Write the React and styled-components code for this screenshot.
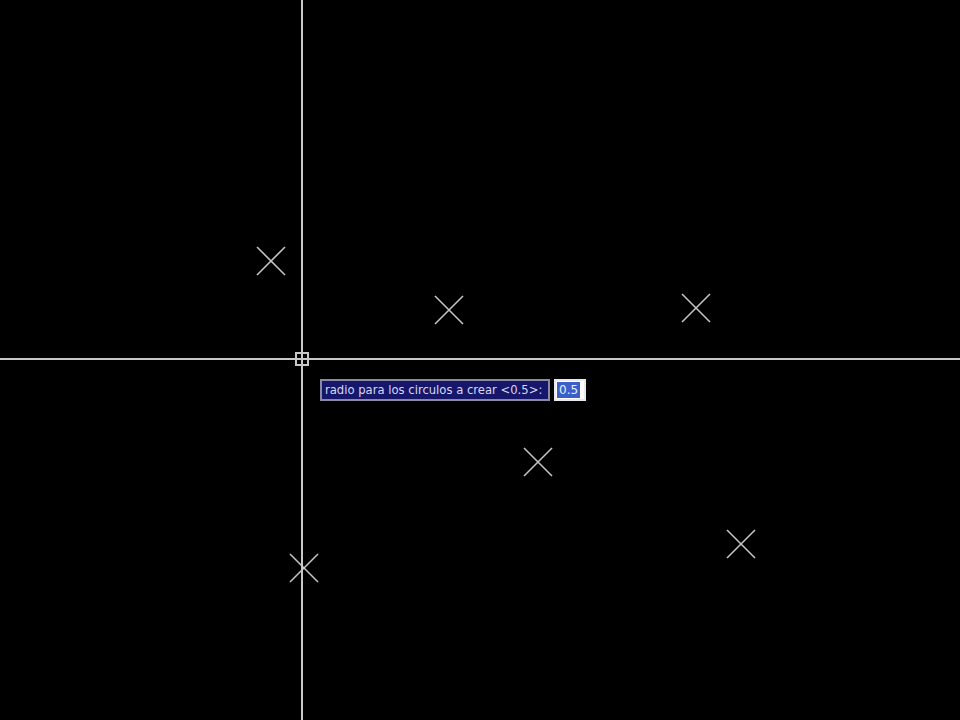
import styled, { createGlobalStyle } from 'styled-components';

const GlobalStyle = createGlobalStyle`
    html, body {
        margin: 0;
        padding: 0;
        background: #000;
    }
`;

// point markers placed in drawing coordinates
const points = [
    { x: 271, y: 261 },
    { x: 449, y: 310 },
    { x: 696, y: 308 },
    { x: 538, y: 462 },
    { x: 741, y: 544 },
    { x: 304, y: 568 },
];

const cursor = { x: 302, y: 359 };

const Viewport = styled.div`
    position: relative;
    width: 960px;
    height: 720px;
    background: #000;
    overflow: hidden;
`;

const Drawing = styled.svg`
    display: block;
`;

const Prompt = styled.div`
    position: absolute;
    left: 320px;
    top: 379px;
    display: flex;
    align-items: center;
    gap: 4px;
`;

const PromptLabel = styled.div`
    height: 18px;
    width: 220px;
    padding: 0 3px;
    display: flex;
    align-items: center;
    background: #16166a;
    border: 2px solid #8a8aa6;
    color: #d8d8f4;
    font-family: 'DejaVu Sans', Verdana, sans-serif;
    font-size: 11.6px;
    white-space: nowrap;
`;

const PromptInput = styled.div`
    height: 18px;
    width: 26px;
    padding: 0 1px;
    display: flex;
    align-items: center;
    background: #fff;
    border: 2px solid #e8e8f0;
    font-family: 'DejaVu Sans', Verdana, sans-serif;
    font-size: 12px;
`;

const Selected = styled.span`
    background: #3b5ec8;
    color: #e8eeff;
    padding: 1px 2px;
`;

const Marker = ({ x, y }) => (
    <g stroke="#c4c4c4" strokeWidth="1.6">
        <line x1={x - 14} y1={y - 14} x2={x + 14} y2={y + 14} />
        <line x1={x + 14} y1={y - 14} x2={x - 14} y2={y + 14} />
    </g>
);

export default function App() {
    return (
        <Viewport>
            <GlobalStyle />
            <Drawing width="960" height="720" viewBox="0 0 960 720">
                {points.map((p, i) => (
                    <Marker key={i} x={p.x} y={p.y} />
                ))}
                <g stroke="#c8c8c8" strokeWidth="2">
                    <line x1={cursor.x} y1="0" x2={cursor.x} y2="720" />
                    <line x1="0" y1={cursor.y} x2="960" y2={cursor.y} />
                </g>
                <rect
                    x={cursor.x - 6}
                    y={cursor.y - 6}
                    width="12"
                    height="12"
                    fill="none"
                    stroke="#c8c8c8"
                    strokeWidth="2"
                />
            </Drawing>
            <Prompt>
                <PromptLabel>radio para los circulos a crear &lt;0.5&gt;:</PromptLabel>
                <PromptInput>
                    <Selected>0.5</Selected>
                </PromptInput>
            </Prompt>
        </Viewport>
    );
}
